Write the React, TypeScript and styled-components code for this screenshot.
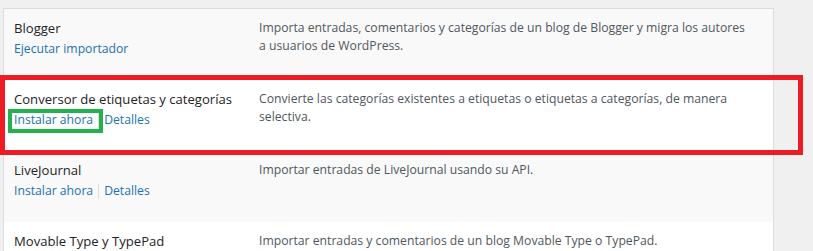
import React from "react";
import styled, { createGlobalStyle } from "styled-components";

const GlobalStyle = createGlobalStyle`
  html, body {
    margin: 0;
    padding: 0;
    background: #f0f0f1;
  }
  body {
    font-family: "Open Sans", "Noto Sans", sans-serif;
    color: #1d2327;
  }
`;

const Page = styled.div`
  position: relative;
  padding: 8px 0 0 3px;
  height: 251px;
  box-sizing: border-box;
  overflow: hidden;
`;

const ImporterTable = styled.div`
  width: 771px;
  box-sizing: border-box;
  border: 1px solid #dcdcde;
  border-bottom: none;
  background: #fff;
`;

const Row = styled.div<{ $alt?: boolean }>`
  display: grid;
  grid-template-columns: 245px 1fr;
  height: 71px;
  background: ${props => (props.$alt ? "#f9f9f9" : "#fff")};
`;

const NameCell = styled.div`
  padding: 9px 10px 0;
`;

const Title = styled.div`
  font-size: 13.1px;
  line-height: 21px;
  white-space: nowrap;
  color: #1d2327;
`;

const Actions = styled.div`
  display: flex;
  align-items: center;
  font-size: 12.2px;
  line-height: 20px;
`;

const ActionLink = styled.a`
  color: #2271b1;
  text-decoration: none;
`;

const Separator = styled.span`
  display: inline-block;
  width: 1px;
  height: 15px;
  margin: 0 5px;
  background: #ead9d2;
`;

const Desc = styled.div`
  padding: 10px 20px 0 10px;
  font-size: 12.2px;
  line-height: 18px;
  color: #50575e;
`;

const Mark = styled.div<{ $color: string; $width: number }>`
  position: absolute;
  box-sizing: border-box;
  border: ${props => props.$width}px solid ${props => props.$color};
  pointer-events: none;
`;

const RedMark = styled(Mark)`
  left: 0;
  top: 75px;
  width: 803px;
  height: 80px;
`;

const GreenMark = styled(Mark)`
  left: 8px;
  top: 109px;
  width: 95px;
  height: 24px;
`;

type Importer = {
  name: string;
  actions: string[];
  desc: string;
};

const importers: Importer[] = [
  {
    name: "Blogger",
    actions: ["Ejecutar importador"],
    desc:
      "Importa entradas, comentarios y categorías de un blog de Blogger y migra los autores a usuarios de WordPress."
  },
  {
    name: "Conversor de etiquetas y categorías",
    actions: ["Instalar ahora", "Detalles"],
    desc:
      "Convierte las categorías existentes a etiquetas o etiquetas a categorías, de manera selectiva."
  },
  {
    name: "LiveJournal",
    actions: ["Instalar ahora", "Detalles"],
    desc: "Importar entradas de LiveJournal usando su API."
  },
  {
    name: "Movable Type y TypePad",
    actions: ["Instalar ahora", "Detalles"],
    desc: "Importar entradas y comentarios de un blog Movable Type o TypePad."
  }
];

export default function App() {
  return (
    <>
      <GlobalStyle />
      <Page>
        <ImporterTable>
          {importers.map((imp, i) => (
            <Row key={imp.name} $alt={i % 2 === 0}>
              <NameCell>
                <Title>{imp.name}</Title>
                <Actions>
                  {imp.actions.map((a, j) => (
                    <React.Fragment key={a}>
                      {j > 0 && <Separator />}
                      <ActionLink href="#">{a}</ActionLink>
                    </React.Fragment>
                  ))}
                </Actions>
              </NameCell>
              <Desc>{imp.desc}</Desc>
            </Row>
          ))}
        </ImporterTable>
        <RedMark $color="#ed1c24" $width={5} />
        <GreenMark $color="#22b14c" $width={4} />
      </Page>
    </>
  );
}
